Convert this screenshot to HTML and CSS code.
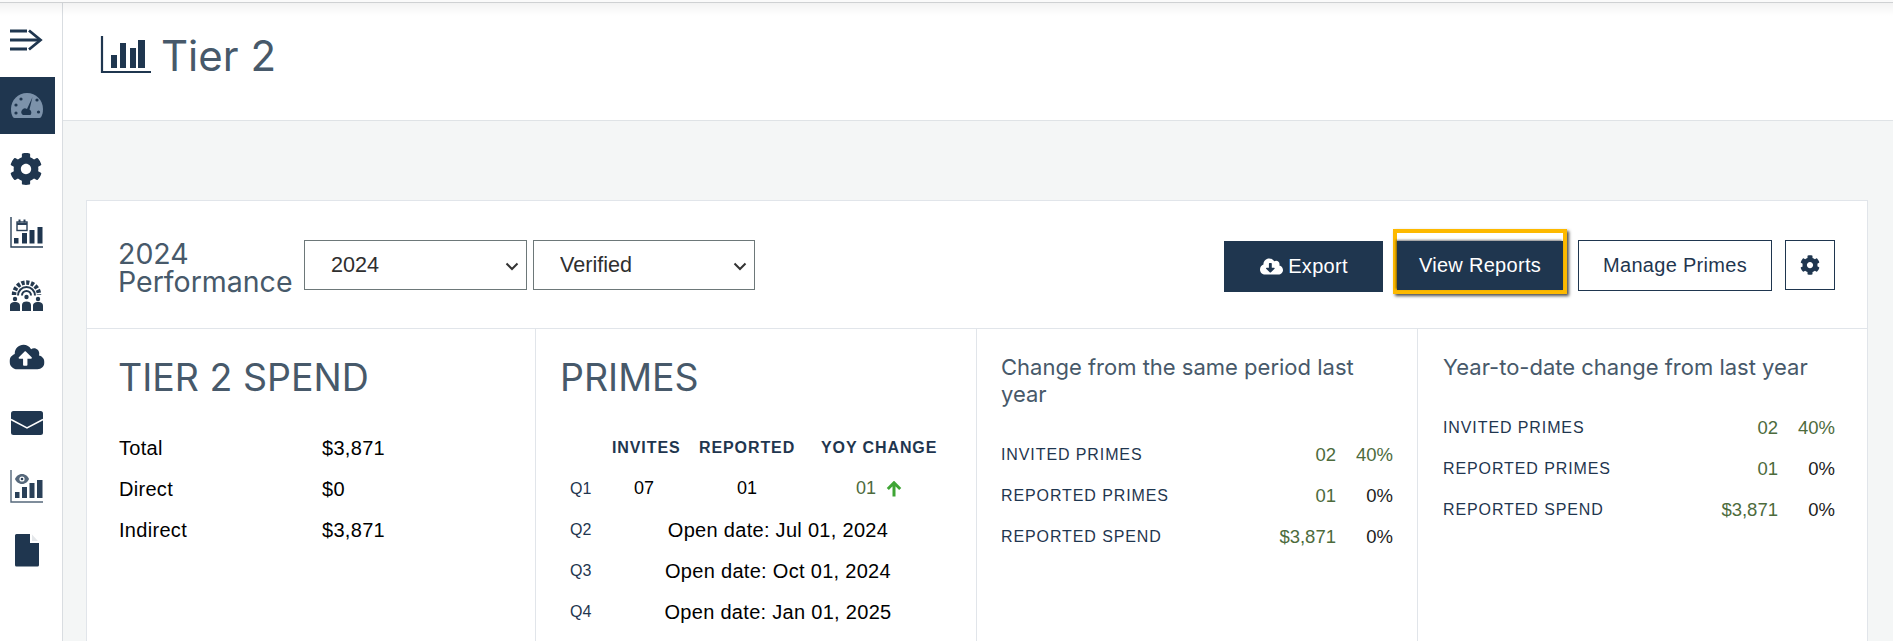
FILE: index.html
```html
<!DOCTYPE html>
<html lang="en">
<head>
<meta charset="utf-8">
<title>Tier 2</title>
<link rel="stylesheet" href="styles.css">
</head>
<body>
<svg class="defs" width="0" height="0" aria-hidden="true">
  <symbol id="cog" viewBox="0 0 512 512"><path d="M487.4 315.7l-42.6-24.6c4.3-23.2 4.3-47 0-70.2l42.6-24.6c4.9-2.8 7.1-8.6 5.5-14-11.1-35.6-30-67.8-54.7-94.6-3.8-4.1-10-5.1-14.8-2.3L380.8 110c-17.9-15.4-38.5-27.3-60.8-35.1V25.8c0-5.6-3.9-10.5-9.4-11.7-36.7-8.2-74.3-7.8-109.2 0-5.5 1.2-9.4 6.1-9.4 11.7V75c-22.2 7.9-42.8 19.8-60.8 35.1L88.7 85.5c-4.9-2.8-11-1.9-14.8 2.3-24.7 26.7-43.6 58.9-54.7 94.6-1.7 5.4.6 11.2 5.5 14L67.3 221c-4.3 23.2-4.3 47 0 70.2l-42.6 24.6c-4.9 2.8-7.1 8.6-5.5 14 11.1 35.6 30 67.8 54.7 94.6 3.8 4.1 10 5.1 14.8 2.3l42.6-24.6c17.9 15.4 38.5 27.3 60.8 35.1v49.2c0 5.6 3.9 10.5 9.4 11.7 36.7 8.2 74.3 7.8 109.2 0 5.5-1.2 9.4-6.1 9.4-11.7v-49.2c22.2-7.9 42.8-19.8 60.8-35.1l42.6 24.6c4.9 2.8 11 1.9 14.8-2.3 24.7-26.7 43.6-58.9 54.7-94.6 1.5-5.5-.7-11.3-5.6-14.1zM256 336c-44.1 0-80-35.9-80-80s35.9-80 80-80 80 35.9 80 80-35.9 80-80 80z"/></symbol>
</svg>
<div class="top-shade"></div>
<div class="app">
  <nav class="sidebar">
    <div class="nav-toggle">
      <svg class="nav-icon" viewBox="0 0 55 53"><g fill="none" stroke="#1f364f" stroke-width="3"><path d="M10 19h17M10 28h30M10 37h17"/><path d="M29 18.500L40.500 28 29 37.500" stroke-width="2.800"/></g></svg>
    </div>
    <div class="nav-item active">
      <svg class="nav-icon" viewBox="0 0 55 57">
        <path fill="#7c92aa" d="M27 16c-9 0-16 7-16 16 0 3.500.7 6.200 2 8.200 .4.6 1 .8 1.600.8h24.800c.6 0 1.200-.2 1.600-.8 1.300-2 2-4.700 2-8.200 0-9-7-16-16-16z"/>
        <g fill="#1f364f"><circle cx="16" cy="28" r="1.600"/><circle cx="21" cy="22" r="1.600"/><circle cx="37" cy="23" r="1.600"/><circle cx="38.500" cy="35" r="1.600"/><circle cx="16" cy="36" r="1.600"/><path d="M32.500 20L29.500 32.500a3.600 3.600 0 0 1 1 5.500h-7.500a3.600 3.600 0 0 1 4-6z"/></g>
      </svg>
    </div>
    <div class="nav-item">
      <svg class="nav-icon" viewBox="0 0 55 57"><use href="#cog" x="9.500" y="12.500" width="33" height="33" fill="#1f364f"/></svg>
    </div>
    <div class="nav-item">
      <svg class="nav-icon" viewBox="0 0 55 57">
        <path fill="none" stroke="#2a4058" stroke-width="1.400" d="M11 14v30h32"/>
        <g fill="#1f364f"><rect x="14" y="35" width="4.500" height="5.500"/><rect x="22" y="30" width="5" height="10.500"/><rect x="29.500" y="27" width="5" height="13.500"/><rect x="37.500" y="24" width="5" height="16.500"/></g>
        <rect x="17" y="19" width="10" height="8.500" fill="none" stroke="#2a4058" stroke-width="1.400"/>
        <path stroke="#2a4058" stroke-width="2" d="M19.500 16.500v3M24.500 16.500v3M17 21h10"/>
      </svg>
    </div>
    <div class="nav-item">
      <svg class="nav-icon" viewBox="0 0 55 57">
        <g fill="none" stroke="#24394f">
          <path stroke-width="4.500" stroke-dasharray="3.200 1.600" d="M14 29a12.500 12.500 0 0 1 25 0"/>
          <path stroke-width="2" d="M18 29.500a8.500 8.500 0 0 1 17 0M22 29.500a4.500 4.500 0 0 1 9 0"/>
        </g>
        <g fill="#24394f">
          <circle cx="26.500" cy="31" r="2.200"/>
          <circle cx="15" cy="33" r="2.200"/><circle cx="38" cy="33" r="2.200"/>
          <path d="M10 45v-5c0-3 2-4 5-4s5 1 5 4v5zM22 45v-6c0-2.500 2-3.500 4.500-3.500s4.500 1 4.500 3.500v6zM33 45v-5c0-3 2-4 5-4s5 1 5 4v5z"/>
        </g>
      </svg>
    </div>
    <div class="nav-item">
      <svg class="nav-icon" viewBox="0 0 55 57">
        <svg x="9.500" y="14" width="35" height="28" viewBox="0 0 640 512"><path fill="#1f364f" d="M537.6 226.600c4.100-10.700 6.400-22.400 6.400-34.600 0-53-43-96-96-96-19.700 0-38.100 6-53.300 16.200C367 64.200 315.300 32 256 32c-88.400 0-160 71.600-160 160 0 2.700.1 5.400.2 8.100C40.200 219.800 0 273.200 0 336c0 79.500 64.500 144 144 144h368c70.700 0 128-57.300 128-128 0-61.900-44-113.600-102.400-125.400zM393.400 288H328v112c0 8.800-7.200 16-16 16h-48c-8.800 0-16-7.200-16-16V288h-65.400c-14.300 0-21.400-17.200-11.300-27.300l105.400-105.400c6.200-6.200 16.400-6.200 22.600 0l105.400 105.400c10.100 10.100 2.900 27.300-11.300 27.300z"/></svg>
      </svg>
    </div>
    <div class="nav-item">
      <svg class="nav-icon" viewBox="0 0 55 57">
        <rect x="11" y="19" width="32" height="24" rx="2.500" fill="#1f364f"/>
        <path d="M11 27.500L27 36l16-8.500" fill="none" stroke="#fff" stroke-width="1.500"/>
      </svg>
    </div>
    <div class="nav-item">
      <svg class="nav-icon" viewBox="0 0 55 57">
        <path fill="none" stroke="#56687b" stroke-width="1.400" d="M11 15v32h32"/>
        <g fill="#2a4058"><rect x="15" y="37" width="4.500" height="6"/><rect x="22" y="32" width="5" height="11"/><rect x="29.500" y="28" width="5" height="15"/><rect x="37" y="25" width="5.500" height="18"/></g>
        <path fill="#56687b" d="M22 19c3.500 0 6 2.500 7 5-1 2.500-3.500 5-7 5s-6-2.500-7-5c1-2.500 3.500-5 7-5z"/>
        <circle cx="22" cy="24" r="2.600" fill="#fff"/><circle cx="22" cy="24" r="1.300" fill="#2a4058"/>
      </svg>
    </div>
    <div class="nav-item">
      <svg class="nav-icon" viewBox="0 0 55 57">
        <path fill="#1f364f" d="M16.500 16H30v9h9v22a1.500 1.500 0 0 1-1.500 1.500h-21a1.500 1.500 0 0 1-1.500-1.500V17.500a1.500 1.500 0 0 1 1.500-1.500z"/>
        <path fill="#1f364f" d="M32 16.500l6 6.500h-6z" opacity=".12"/>
      </svg>
    </div>
  </nav>
  <main class="main">
    <header class="page-header">
      <svg class="title-icon" viewBox="0 0 50 38">
        <path fill="none" stroke="#1f364f" stroke-width="2.200" d="M1 0v36h49"/>
        <g fill="#1f364f"><rect x="10" y="19" width="6" height="13"/><rect x="19" y="7" width="6" height="25"/><rect x="29" y="12" width="6" height="20"/><rect x="37" y="4" width="7" height="28"/></g>
      </svg>
      <h1 class="page-title">Tier 2</h1>
    </header>
    <section class="card">
      <div class="card-top">
        <div class="filters">
          <h2 class="perf-title">2024<br>Performance</h2>
          <div class="picker-wrap picker-year">
            <select class="picker"><option>2024</option></select>
            <svg class="chevron" viewBox="0 0 14 9"><path d="M1.500 1.500L7 7l5.500-5.500" fill="none" stroke="#333" stroke-width="2"/></svg>
          </div>
          <div class="picker-wrap picker-status">
            <select class="picker"><option>Verified</option></select>
            <svg class="chevron" viewBox="0 0 14 9"><path d="M1.500 1.500L7 7l5.500-5.500" fill="none" stroke="#333" stroke-width="2"/></svg>
          </div>
        </div>
        <div class="actions">
          <button class="btn btn-solid btn-export">
            <svg class="btn-icon" viewBox="0 0 640 512"><path fill="#fff" d="M537.600 226.600c4.100-10.700 6.400-22.400 6.400-34.600 0-53-43-96-96-96-19.700 0-38.100 6-53.300 16.200C367 64.200 315.300 32 256 32c-88.400 0-160 71.600-160 160 0 2.700.1 5.400.2 8.100C40.200 219.800 0 273.200 0 336c0 79.500 64.500 144 144 144h368c70.700 0 128-57.300 128-128 0-61.900-44-113.600-102.400-125.400zm-132.900 88.700L299.300 420.700c-6.200 6.200-16.400 6.200-22.600 0L171.300 315.300c-10.100-10.100-2.900-27.300 11.300-27.300H248V176c0-8.800 7.200-16 16-16h48c8.800 0 16 7.200 16 16v112h65.400c14.300 0 21.400 17.200 11.300 27.300z"/></svg>
            Export
          </button>
          <div class="focus-ring"><button class="btn btn-solid btn-view">View Reports</button></div>
          <button class="btn btn-line btn-manage">Manage Primes</button>
          <button class="btn btn-line btn-gear" aria-label="Settings"><svg class="gear-icon"><use href="#cog"/></svg></button>
        </div>
      </div>
      <div class="panels">
        <div class="panel panel-spend">
          <h3 class="panel-title">TIER 2 SPEND</h3>
          <dl class="spend-list">
            <dt>Total</dt><dd>$3,871</dd>
            <dt>Direct</dt><dd>$0</dd>
            <dt>Indirect</dt><dd>$3,871</dd>
          </dl>
        </div>
        <div class="panel panel-primes">
          <h3 class="panel-title">PRIMES</h3>
          <div class="primes-grid">
            <span></span><span class="col-head">INVITES</span><span class="col-head">REPORTED</span><span class="col-head">YOY CHANGE</span>
            <span class="quarter">Q1</span><span class="num num-invites">07</span><span class="num num-reported">01</span>
            <span class="num num-yoy">01<svg class="up-arrow" viewBox="0 0 16 16"><path d="M8 15.500V2M1.800 8L8 1.800 14.200 8" fill="none" stroke="#3fa535" stroke-width="3"/></svg></span>
            <span class="quarter">Q2</span><span class="open-date">Open date: Jul 01, 2024</span>
            <span class="quarter">Q3</span><span class="open-date">Open date: Oct 01, 2024</span>
            <span class="quarter">Q4</span><span class="open-date">Open date: Jan 01, 2025</span>
          </div>
        </div>
        <div class="panel panel-change">
          <h4 class="change-title">Change from the same period last year</h4>
          <div class="change-grid">
            <span class="metric">INVITED PRIMES</span><span class="delta">02</span><span class="pct up">40%</span>
            <span class="metric">REPORTED PRIMES</span><span class="delta">01</span><span class="pct">0%</span>
            <span class="metric">REPORTED SPEND</span><span class="delta">$3,871</span><span class="pct">0%</span>
          </div>
        </div>
        <div class="panel panel-ytd">
          <h4 class="change-title">Year-to-date change from last year</h4>
          <div class="change-grid">
            <span class="metric">INVITED PRIMES</span><span class="delta">02</span><span class="pct up">40%</span>
            <span class="metric">REPORTED PRIMES</span><span class="delta">01</span><span class="pct">0%</span>
            <span class="metric">REPORTED SPEND</span><span class="delta">$3,871</span><span class="pct">0%</span>
          </div>
        </div>
      </div>
    </section>
  </main>
</div>
</body>
</html>
```
FILE: styles.css
```css
* { box-sizing: border-box; }
html, body { margin: 0; height: 641px; overflow: hidden; }
body {
  position: relative;
  background: #fff;
  color: #000;
  font-family: "Liberation Sans", Arial, sans-serif;
  font-size: 20px;
  letter-spacing: .3px;
}
.defs { position: absolute; }
.top-shade {
  position: absolute;
  left: 0; right: 0; top: 0;
  height: 16px;
  z-index: 5;
  pointer-events: none;
  border-top: 2px solid #fafafa;
  background: linear-gradient(#cfd1d3 0, #cfd1d3 1px, rgba(0,0,0,.05) 1px, rgba(0,0,0,0) 100%);
}
.app { display: flex; height: 641px; }

.sidebar {
  flex: 0 0 63px;
  border-right: 1px solid #d9dde1;
  padding-top: 12px;
  display: flex;
  flex-direction: column;
}
.nav-toggle { width: 55px; height: 53px; margin-bottom: 12px; }
.nav-item { width: 55px; height: 57px; margin-bottom: 6px; flex: none; }
.nav-item.active { background: #1f364f; }
.nav-icon { display: block; width: 100%; height: 100%; }

.main { flex: 1; min-width: 0; background: #f4f6f6; }
.page-header {
  height: 121px;
  background: #fff;
  border-bottom: 1px solid #dfe3e6;
  padding: 36px 0 0 38px;
  display: flex;
  align-items: flex-start;
  gap: 10px;
}
.title-icon { width: 50px; height: 38px; overflow: visible; flex: none; }
.page-title {
  margin: -3px 0 0;
  font: 400 42px/46px Inter, sans-serif;
  letter-spacing: 0;
  color: #47596a;
}

.card {
  margin: 79px 25px 0 23px;
  background: #fff;
  border: 1px solid #e1e5ea;
  border-bottom: 0;
  height: 441px;
}
.card-top {
  height: 128px;
  border-bottom: 1px solid #e1e5ea;
  padding: 28px 32px 0 31px;
  display: flex;
  justify-content: space-between;
  align-items: flex-start;
}
.filters { display: flex; align-items: flex-start; margin-top: 11px; }
.perf-title {
  margin: 0;
  width: 186px;
  font: 400 28.5px/28px Inter, sans-serif;
  letter-spacing: 0;
  color: #47596a;
  white-space: nowrap;
}
.picker-wrap { position: relative; height: 50px; }
.picker-year { width: 223px; margin-right: 6px; }
.picker-status { width: 222px; }
.picker {
  appearance: none;
  display: block;
  width: 100%;
  height: 100%;
  border: 1px solid #6d7879;
  border-radius: 0;
  background: #fff;
  color: #2f2f2f;
  font: 21.6px "Liberation Sans", Arial, sans-serif;
  letter-spacing: 0;
  padding: 0 0 1px 26px;
}
.chevron {
  position: absolute;
  right: 8px;
  top: 22px;
  width: 14px;
  height: 9px;
  pointer-events: none;
}

.actions { display: flex; align-items: flex-start; }
.btn {
  font: 20px "Liberation Sans", Arial, sans-serif;
  letter-spacing: .3px;
  border-radius: 0;
  cursor: pointer;
  padding: 0;
  display: flex;
  align-items: center;
  justify-content: center;
}
.btn-solid { background: #1f364f; color: #fff; border: 0; }
.btn-export { width: 159px; height: 51px; margin: 12px 10px 0 0; gap: 5px; padding-left: 1px; }
.btn-icon { width: 23px; height: 19px; }
.focus-ring {
  width: 174px;
  height: 65px;
  border: 4px solid #fdb900;
  background: #fff;
  padding-top: 8px;
  box-shadow: 2px 2px 3px rgba(0,0,0,.7);
  margin-right: 11px;
}
.btn-view { width: 100%; height: 49px; box-shadow: -1px -1px 2px rgba(0,0,0,.5); }
.btn-line { background: #fff; color: #1f364f; border: 1px solid #1f364f; margin-top: 11px; }
.btn-manage { width: 194px; height: 51px; margin-right: 13px; }
.btn-gear { width: 50px; height: 50px; }
.gear-icon { width: 20px; height: 20px; fill: #1f364f; }

.panels {
  display: grid;
  grid-template-columns: 449px 441px 441px 1fr;
  height: 312px;
}
.panel { border-right: 1px solid #e1e5ea; padding-top: 27px; }
.panel:last-child { border-right: 0; }
.panel-spend { padding-left: 31px; }
.panel-primes { padding-left: 24px; }
.panel-change { padding: 25px 24px 0 24px; }
.panel-ytd { padding: 25px 32px 0 25px; }
.panel-title {
  margin: 0;
  font: 400 37.5px/44px Inter, sans-serif;
  letter-spacing: 0;
  color: #47596a;
  white-space: nowrap;
}
.spend-list {
  margin: 28px 0 0 1px;
  display: grid;
  grid-template-columns: 203px 1fr;
  grid-auto-rows: 41px;
  align-items: center;
}
.spend-list dd { margin: 0; }

.primes-grid {
  margin: 27px 0 0 2px;
  display: grid;
  grid-template-columns: 50px 87px 122px 117px;
  grid-auto-rows: 41px;
  align-items: center;
}
.col-head {
  font-size: 16px;
  font-weight: 700;
  letter-spacing: .9px;
  color: #1f364f;
  white-space: nowrap;
}
.quarter { font-size: 16px; color: #1f364f; padding-left: 8px; letter-spacing: 0; }
.num { font-size: 18px; letter-spacing: 0; }
.num-invites { padding-left: 22px; }
.num-reported { padding-left: 38px; }
.num-yoy { padding-left: 35px; color: #4d6b3c; display: flex; align-items: center; gap: 10px; }
.up-arrow { width: 16px; height: 16px; }
.open-date { grid-column: span 3; text-align: center; padding: 2px 0 0 6px; white-space: nowrap; }

.change-title {
  margin: 0;
  font: 400 22px/27px Inter, sans-serif;
  letter-spacing: 0;
  color: #47596a;
}
.change-grid {
  margin-top: 26px;
  display: grid;
  grid-template-columns: 1fr auto 57px;
  grid-auto-rows: 41px;
  align-items: center;
}
.metric { font-size: 16px; letter-spacing: .9px; color: #1f364f; }
.delta { font-size: 18.5px; letter-spacing: 0; color: #4d6b3c; text-align: right; }
.pct { font-size: 18.5px; letter-spacing: 0; text-align: right; color: #1c1c1c; }
.pct.up { color: #4d6b3c; }
```
